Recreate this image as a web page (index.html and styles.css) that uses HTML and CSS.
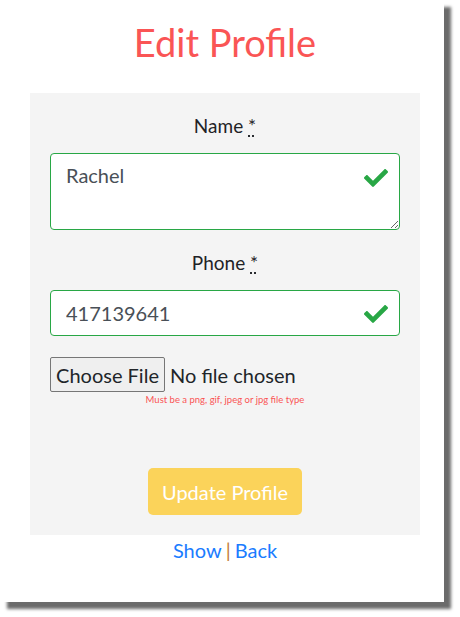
FILE: index.html
```html
<!DOCTYPE html>
<html>
<head>
<meta charset="utf-8">
<link rel="stylesheet" href="styles.css">
</head>
<body>
<div class="page">
<div class="card">
  <h1 class="title">Edit Profile</h1>
  <form class="panel">
    <div class="group">
      <label class="label">Name <abbr title="required">*</abbr></label>
      <div class="field">
        <textarea class="control area">Rachel</textarea>
        <svg class="check" viewBox="0 0 512 512"><path fill="#28a745" d="M173.9 439.4l-166.4-166.4c-10-10-10-26.2 0-36.2l36.2-36.2c10-10 26.2-10 36.2 0L192 312.7 432.1 72.6c10-10 26.2-10 36.2 0l36.2 36.2c10 10 10 26.2 0 36.2L210.1 439.4c-10 10-26.2 10-36.2 0z"/></svg>
      </div>
    </div>
    <div class="group">
      <label class="label">Phone <abbr title="required">*</abbr></label>
      <div class="field">
        <input class="control line" type="text" value="417139641">
        <svg class="check" viewBox="0 0 512 512"><path fill="#28a745" d="M173.9 439.4l-166.4-166.4c-10-10-10-26.2 0-36.2l36.2-36.2c10-10 26.2-10 36.2 0L192 312.7 432.1 72.6c10-10 26.2-10 36.2 0l36.2 36.2c10 10 10 26.2 0 36.2L210.1 439.4c-10 10-26.2 10-36.2 0z"/></svg>
      </div>
    </div>
    <div class="filegroup">
      <input class="file" type="file">
      <div class="hint">Must be a png, gif, jpeg or jpg file type</div>
    </div>
    <div class="actions">
      <button class="submit" type="button" disabled>Update Profile</button>
    </div>
  </form>
  <div class="links"><a href="#">Show</a><span class="sep">|</span><a href="#">Back</a></div>
</div>
</div>
</body>
</html>
```
FILE: styles.css
```css
html, body { margin: 0; padding: 0; background: #fff; }
body { font-family: "Lato", "Open Sans", sans-serif; color: #1f2226; }
.page { width: 460px; height: 617px; }
.card {
  width: 438px; height: 602px; background: #fff; padding-left: 6px;
  box-shadow: 7px 7px 3px rgba(0,0,0,0.58);
  display: flex; flex-direction: column; align-items: center;
}
.title {
  margin: 0; padding-top: 18px; height: 93px; box-sizing: border-box;
  font-size: 38px; font-weight: 400; color: #fa5555; line-height: 48px;
}
.panel {
  width: 390px; background: #f4f4f4; box-sizing: border-box;
  padding: 20px 20px 20px; display: flex; flex-direction: column;
  height: 442px;
}
.group { display: flex; flex-direction: column; align-items: center; margin-bottom: 20px; }
.label { font-size: 19px; line-height: 26px; margin-bottom: 14px; }
abbr { text-decoration: underline dotted; text-underline-offset: 3px; }
.field { position: relative; width: 350px; }
.control {
  display: block; width: 100%; box-sizing: border-box;
  border: 1px solid #28a745; border-radius: 4px; background: #fff;
  font-family: inherit; font-size: 20px; color: #495057;
  padding: 6px 50px 6px 15px; line-height: 30px; margin: 0;
}
.area { height: 77px; resize: vertical; }
.line { height: 46px; }
.check { position: absolute; right: 12px; top: 13px; width: 24px; height: 24px; }
.line + .check { top: 12px; }
.filegroup { display: flex; flex-direction: column; align-items: center; margin-top: 1px; }
.file { align-self: flex-start; font-family: inherit; font-size: 20px; color: #212529; height: 35px; }
.file::file-selector-button {
  font-family: inherit; font-size: 20px; color: #212529;
  height: 35px; width: 115px; padding: 0; margin-right: 5px;
  background: #efefef; border: 1px solid #767676; border-radius: 2px;
}
.hint { font-size: 9.5px; color: #fa5555; margin-top: 2px; }
.actions { margin-top: auto; display: flex; justify-content: center; }
.submit {
  background: #fbd35a; border: 0; border-radius: 5px; color: #fff;
  font-family: inherit; font-size: 20px; width: 154px; height: 47px; padding: 0;
}
.links { margin-top: 3px; font-size: 20px; line-height: 24px; }
.links a { color: #1a7cff; text-decoration: none; }
.sep { color: #c47a36; margin: 0 4px; }
```
